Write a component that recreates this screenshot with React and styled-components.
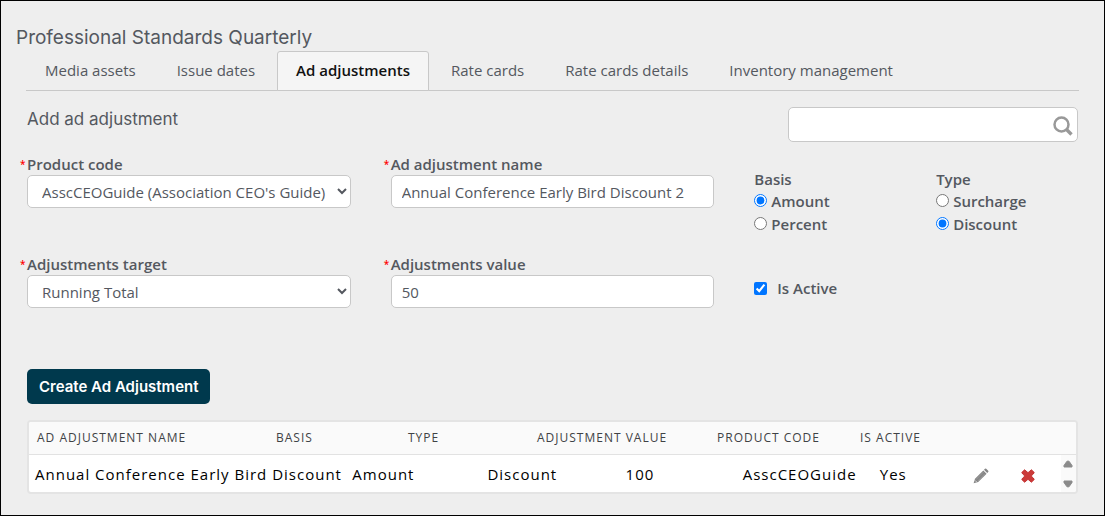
import React, { useState } from 'react'
import styled, { createGlobalStyle } from 'styled-components'

const GlobalStyle = createGlobalStyle`
  * {
    box-sizing: border-box;
  }

  body {
    margin: 0;
    background-color: #eeeeee;
    color: #54585f;
    font-family: "Open Sans", "Noto Sans", sans-serif;
    font-size: 15px;
    line-height: 22px;
  }

  input, select, button {
    font: inherit;
    color: inherit;
  }
`;

const Page = styled.main`
  min-height: 100vh;
  border: 1px solid #000000;
  padding: 24px 26px 20px;
`;

const Title = styled.h1`
  margin: 0 0 0 -11px;
  font-family: Inter, sans-serif;
  font-size: 19px;
  font-weight: 400;
  line-height: 26px;
`;

const Tabs = styled.nav`
  display: flex;
  border-bottom: 1px solid #c8c8c8;
  margin: 0 -1px;
`;

const Tab = styled.a`
  height: 40px;
  margin-bottom: -1px;
  padding: 7px 18px;
  border: 1px solid ${({ $active }) => ($active ? '#c8c8c8' : 'transparent')};
  border-bottom: 1px solid #c8c8c8;
  border-radius: 3px 3px 0 0;
  background-color: ${({ $active }) => ($active ? '#f5f5f5' : 'transparent')};
  color: ${({ $active }) => ($active ? '#111111' : 'inherit')};
  font-weight: ${({ $active }) => ($active ? 600 : 400)};
  text-decoration: none;
  white-space: nowrap;

  & + & {
    margin-left: 3px;
  }
`;

const Toolbar = styled.div`
  display: flex;
  justify-content: space-between;
  align-items: flex-start;
  padding-top: 16px;
`;

const Heading = styled.h2`
  margin: 0;
  font-family: Inter, sans-serif;
  font-size: 17px;
  font-weight: 400;
  line-height: 24px;
`;

const SearchBox = styled.div`
  display: flex;
  align-items: center;
  width: 290px;
  height: 35px;
  padding: 0 4px 0 10px;
  border: 1px solid #c8c8c8;
  border-radius: 5px;
  background-color: #ffffff;

  input {
    flex: 1;
    min-width: 0;
    border: 0;
    outline: 0;
    background: none;
  }

  button {
    display: flex;
    padding: 3px 0 0;
    border: 0;
    background: none;
  }
`;

const Form = styled.form`
  margin: 0;
`;

const Fields = styled.div`
  display: grid;
  grid-template-columns: 324fr 324fr 142fr 142fr;
  grid-auto-rows: 100px;
  column-gap: 40px;
  padding-top: 11px;
`;

const FieldBox = styled.div`
  display: flex;
  flex-direction: column;
  min-width: 0;

  label {
    display: flex;
    margin-left: -7px;
    font-weight: 600;
  }

  input, select {
    width: 100%;
    height: 33px;
    border: 1px solid #c8c8c8;
    border-radius: 5px;
    background-color: #ffffff;
  }

  input {
    padding: 0 10px;
  }

  select {
    padding: 0 0 0 10px;
  }
`;

const Required = styled.span`
  width: 7px;
  color: #ff0000;
  font-size: 10px;
`;

const Choices = styled.fieldset`
  min-width: 0;
  margin: 0;
  padding: 15px 0 0;
  border: 0;
  font-weight: 600;
  line-height: 23px;

  legend {
    float: left;
    width: 100%;
    padding: 0;
    line-height: 22px;
  }

  label {
    display: flex;
    align-items: center;
    clear: both;
  }

  input {
    width: 13px;
    height: 13px;
    margin: 0 4px 2px 0;
  }
`;

const ActiveCheck = styled.label`
  display: flex;
  align-items: center;
  gap: 10px;
  height: 22px;
  margin-top: 24px;
  font-weight: 600;

  input {
    width: 13px;
    height: 13px;
    margin: 0;
  }
`;

const CreateButton = styled.button`
  display: block;
  height: 35px;
  margin: 16px 0;
  padding: 0 12px;
  border: 0;
  border-radius: 5px;
  background-color: #00394d;
  color: #ffffff;
  font-family: Inter, sans-serif;
  font-weight: 600;
`;

const TableBox = styled.div`
  border: 2px solid #e4e4e4;
  border-radius: 4px;
  background-color: #ffffff;
  overflow: hidden;
`;

const Table = styled.table`
  display: block;
  letter-spacing: 1px;

  thead, tbody {
    display: block;
  }

  th, td {
    padding: 0;
    text-align: left;
    white-space: nowrap;
  }
`;

const HeadRow = styled.tr`
  display: grid;
  grid-template-columns: 239fr 132fr 129fr 180fr 143fr 216fr;
  align-items: center;
  height: 33px;
  padding-left: 8px;
  border-bottom: 1px solid #e2e2e2;
  background-color: #fafafa;
  color: #3f4245;
  font-size: 12px;

  th {
    font-weight: 400;
    text-transform: uppercase;
  }
`;

const BodyRow = styled.tr`
  display: grid;
  grid-template-columns: 317fr 135fr 138fr 117fr 137fr 93fr 48fr 40fr 15fr;
  align-items: center;
  height: 37px;
  padding-left: 6px;
  color: #000000;
`;

const IconButton = styled.button`
  display: flex;
  padding: 4px 0 0;
  border: 0;
  background: none;
`;

const Scroller = styled.td`
  display: flex;
  flex-direction: column;
  align-items: center;
  justify-content: space-between;
  align-self: stretch;
  background-color: #fafafa;

  button {
    display: flex;
    padding: 5px 0 4px;
    border: 0;
    background: none;
  }
`;

const SearchIcon = () => (
  <svg width="20" height="20" viewBox="0 0 20 20" fill="none" stroke="#999999" aria-hidden="true">
    <circle cx="8.5" cy="8.5" r="7" strokeWidth="2.5" />
    <path d="M13.5 13.5 18.5 18.5" strokeWidth="3.4" />
  </svg>
)

const PencilIcon = () => (
  <svg width="16" height="16" viewBox="0 0 16 16" fill="#858585" aria-hidden="true">
    <path d="M.6 15.2 2 10.8 10.3 2.5 13.6 5.8 5.2 14.1Z" />
    <path d="m11 1.8 1-1q.6-.6 1.2 0l2 2q.6.6 0 1.2l-1 1Z" />
    <path d="M3.2 11.4 10.5 4M4.8 13 12.1 5.6" stroke="#a9a9a9" strokeWidth=".6" />
    <path d="m2.2 12.5 1.5 1.5" stroke="#ffffff" strokeWidth=".7" />
  </svg>
)

const CrossIcon = () => (
  <svg width="14" height="14" viewBox="0 0 14 14" aria-hidden="true">
    <path
      d="M3.6.8 7 3.7 10.4.8 13.3 3.6 10.3 7l3 3.4-2.9 2.8L7 10.3l-3.4 2.9L.7 10.4 3.7 7 .7 3.6Z"
      fill="#cb3a39"
      stroke="#c43434"
      strokeLinejoin="round"
    />
  </svg>
)

const Arrow = ({ down }) => (
  <svg width="10" height="8" viewBox="0 0 10 8" aria-hidden="true">
    <path
      d={down ? 'M1 1H9V2.5L6 6.8H4L1 2.5Z' : 'M1 7H9V5.5L6 1.2H4L1 5.5Z'}
      fill="#8b8b8b"
      stroke="#8b8b8b"
      strokeLinejoin="round"
    />
  </svg>
)

const Field = ({ id, label, children }) => (
  <FieldBox>
    <label htmlFor={id}><Required>*</Required>{label}</label>
    {children}
  </FieldBox>
)

const RadioGroup = ({ name, title, options, value, onChange }) => (
  <Choices>
    <legend>{title}</legend>
    {options.map((option) => (
      <label key={option}>
        <input type="radio" name={name} checked={value === option} onChange={() => onChange(option)} />
        {option}
      </label>
    ))}
  </Choices>
)

const tabs = ['Media assets', 'Issue dates', 'Ad adjustments', 'Rate cards', 'Rate cards details', 'Inventory management'];
const columns = ['Ad adjustment name', 'Basis', 'Type', 'Adjustment value', 'Product code', 'Is active'];
const rows = [
  ['Annual Conference Early Bird Discount', 'Amount', 'Discount', '100', 'AsscCEOGuide', 'Yes'],
];

const App = () => {
  const [tab, setTab] = useState('Ad adjustments')
  const [basis, setBasis] = useState('Amount')
  const [type, setType] = useState('Discount')

  return (
    <>
      <GlobalStyle />
      <Page>
        <Title>Professional Standards Quarterly</Title>
        <Tabs>
          {tabs.map((name) => (
            <Tab key={name} href="#" $active={name === tab} onClick={() => setTab(name)}>{name}</Tab>
          ))}
        </Tabs>
        <Toolbar>
          <Heading>Add ad adjustment</Heading>
          <SearchBox>
            <input type="search" aria-label="Search" />
            <button type="button" aria-label="Search"><SearchIcon /></button>
          </SearchBox>
        </Toolbar>
        <Form onSubmit={(e) => e.preventDefault()}>
          <Fields>
            <Field id="product" label="Product code">
              <select id="product">
                <option>AsscCEOGuide (Association CEO's Guide)</option>
              </select>
            </Field>
            <Field id="name" label="Ad adjustment name">
              <input id="name" type="text" defaultValue="Annual Conference Early Bird Discount 2" />
            </Field>
            <RadioGroup name="basis" title="Basis" options={['Amount', 'Percent']} value={basis} onChange={setBasis} />
            <RadioGroup name="type" title="Type" options={['Surcharge', 'Discount']} value={type} onChange={setType} />
            <Field id="target" label="Adjustments target">
              <select id="target">
                <option>Running Total</option>
              </select>
            </Field>
            <Field id="value" label="Adjustments value">
              <input id="value" type="text" defaultValue="50" />
            </Field>
            <ActiveCheck>
              <input type="checkbox" defaultChecked />
              Is Active
            </ActiveCheck>
          </Fields>
          <CreateButton type="submit">Create Ad Adjustment</CreateButton>
        </Form>
        <TableBox>
          <Table>
            <thead>
              <HeadRow>
                {columns.map((column) => <th key={column}>{column}</th>)}
              </HeadRow>
            </thead>
            <tbody>
              {rows.map((row) => (
                <BodyRow key={row[0]}>
                  {row.map((cell) => <td key={cell}>{cell}</td>)}
                  <td><IconButton type="button" aria-label="Edit"><PencilIcon /></IconButton></td>
                  <td><IconButton type="button" aria-label="Delete"><CrossIcon /></IconButton></td>
                  <Scroller>
                    <button type="button" aria-label="Scroll up"><Arrow /></button>
                    <button type="button" aria-label="Scroll down"><Arrow down /></button>
                  </Scroller>
                </BodyRow>
              ))}
            </tbody>
          </Table>
        </TableBox>
      </Page>
    </>
  )
}

export default App
